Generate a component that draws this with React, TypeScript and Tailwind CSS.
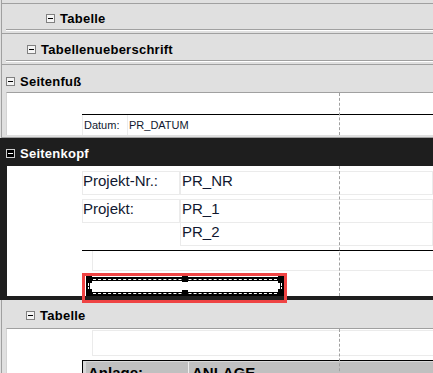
import React from "react";

function MinusIcon({ dark = false }: { dark?: boolean }) {
  return dark ? (
    <span className="relative inline-block w-[9px] h-[9px] border border-[#d0d0d0] bg-black shrink-0">
      <span className="absolute left-[1px] top-[3px] w-[5px] h-px bg-white" />
    </span>
  ) : (
    <span className="relative inline-block w-[9px] h-[9px] border border-[#808080] bg-[#f4f4f4] shrink-0">
      <span className="absolute left-[1px] top-[3px] w-[5px] h-px bg-black" />
    </span>
  );
}

function Header({
  label,
  pl,
  h,
  pt,
  dark = false,
}: {
  label: string;
  pl: string;
  h: string;
  pt: string;
  dark?: boolean;
}) {
  return (
    <div className={`flex items-center gap-[5px] ${pl} ${h} ${pt}`}>
      <MinusIcon dark={dark} />
      <span
        className={`text-[13px] font-bold tracking-[0.25px] leading-[15px] ${dark ? "text-white" : "text-black"}`}
      >
        {label}
      </span>
    </div>
  );
}

function Guide() {
  return <div className="absolute left-[332px] top-0 bottom-0 border-l border-dashed border-[#a0a0a0]" />;
}

export default function App() {
  return (
    <div
      className="relative w-[433px] h-[373px] overflow-hidden bg-[#e0e0e0] flex flex-col"
      style={{ fontFamily: '"Liberation Sans", Arial, sans-serif' }}
    >
      {/* Upper group */}
      <div className="ml-px border-l border-[#a0a0a0] flex flex-col">
        <div className="h-[3px]" />
        <div className="h-px bg-[#a0a0a0]" />
        <Header label="Tabelle" pl="pl-[44px]" h="h-[25px]" pt="pt-[4px]" />
        <div className="ml-[4px] h-px bg-[#a0a0a0]" />
        <div className="ml-[4px] h-px bg-white" />
        <div className="h-[2px]" />
        <div className="h-px bg-[#a0a0a0]" />
        <Header label="Tabellenueberschrift" pl="pl-[25px]" h="h-[26px]" pt="pt-[5px]" />
        <div className="ml-[4px] h-px bg-[#a0a0a0]" />
        <div className="ml-[4px] h-px bg-white" />
        <div className="h-[2px]" />
        <div className="h-px bg-[#a0a0a0]" />
        <Header label="Seitenfuß" pl="pl-[4px]" h="h-[27px]" pt="pt-[5px]" />
        <div className="relative ml-[4px] h-[43px] bg-white border-t border-l border-t-[#a0a0a0] border-l-[#d4d4d4] flex flex-col">
          <Guide />
          <div className="mt-[21px] ml-[75px] h-px bg-black" />
          <div className="ml-[75px] flex h-[20px] text-[11px] leading-[13px] text-[#101830]">
            <div className="w-[46px] border-l border-r border-[#ececec] pt-[4px] pl-px">Datum:</div>
            <div className="flex-1 pt-[4px] pl-px">PR_DATUM</div>
          </div>
        </div>
        <div className="h-[2px]" />
        <div className="h-px bg-[#a0a0a0]" />
      </div>

      {/* Seitenkopf (selected band) */}
      <div className="bg-[#1e1e1e] flex flex-col">
        <Header label="Seitenkopf" pl="pl-[6px]" h="h-[28px]" pt="pt-[3px]" dark />
        <div className="relative ml-[7px] h-[130px] bg-white flex flex-col text-[15px] leading-[17px] text-[#101830]">
          <Guide />
          <div className="mt-[5px] ml-[75px] flex h-[24px]">
            <div className="w-[98px] border border-[#ebebeb]">Projekt-Nr.:</div>
            <div className="flex-1 border border-[#ebebeb] pl-px">PR_NR</div>
          </div>
          <div className="mt-[4px] ml-[75px] flex h-[24px]">
            <div className="w-[98px] border border-[#ebebeb]">Projekt:</div>
            <div className="flex-1 border border-[#ebebeb] pl-px">PR_1</div>
          </div>
          <div className="ml-[173px] h-[23px] border border-t-0 border-[#ebebeb] pl-px">PR_2</div>
          <div className="mt-[4px] ml-[75px] h-px bg-black" />
          <div className="ml-[85px] h-[20px] border-l border-b border-[#ebebeb]" />
        </div>
        <div className="h-[4px]" />
      </div>

      {/* Tabelle lower */}
      <div className="ml-px border-l border-[#a0a0a0] flex flex-col flex-1">
        <Header label="Tabelle" pl="pl-[24px]" h="h-[28px]" pt="pt-[2px]" />
        <div className="relative ml-[4px] flex-1 bg-white border-t border-l border-t-[#a0a0a0] border-l-[#d4d4d4] flex flex-col">
          <Guide />
          <div className="mt-px ml-[85px] h-[26px] border-l border-t border-b border-[#ebebeb]" />
          <div className="mt-[4px] ml-[75px] border-t border-l border-black bg-[#d8d8d8] pl-[3px] pt-px flex-1 flex">
            <div className="w-[102px] bg-[#c0c0c0] text-[15px] font-bold leading-[17px] text-black pt-[2px] pl-[2px]">
              Anlage:
            </div>
            <div className="w-px bg-[#eeeeee]" />
            <div className="flex-1 bg-[#c0c0c0] text-[15px] font-bold leading-[17px] text-black pt-[2px] pl-[3px]">
              ANLAGE
            </div>
          </div>
        </div>
      </div>

      {/* Selected element overlay */}
      <div className="absolute left-[86px] top-[277px] w-[198px] h-[19px] bg-black p-[4px]">
        <div className="w-full h-full bg-white" />
        <div className="absolute inset-[2px] border border-dashed border-white" />
        <div className="absolute left-0 top-[-1px] w-[6px] h-[7px] bg-black" />
        <div className="absolute left-0 bottom-0 w-[6px] h-[7px] bg-black" />
        <div className="absolute left-[96px] top-[-1px] w-[6px] h-[6px] bg-black" />
        <div className="absolute left-[96px] bottom-0 w-[6px] h-[6px] bg-black" />
        <div className="absolute right-0 top-[-1px] w-[6px] h-[7px] bg-black" />
        <div className="absolute right-0 bottom-0 w-[6px] h-[7px] bg-black" />
      </div>
      <div className="absolute left-[82px] top-[273px] w-[205px] h-[30px] border-[3px] border-[#ef4444]" />
    </div>
  );
}
